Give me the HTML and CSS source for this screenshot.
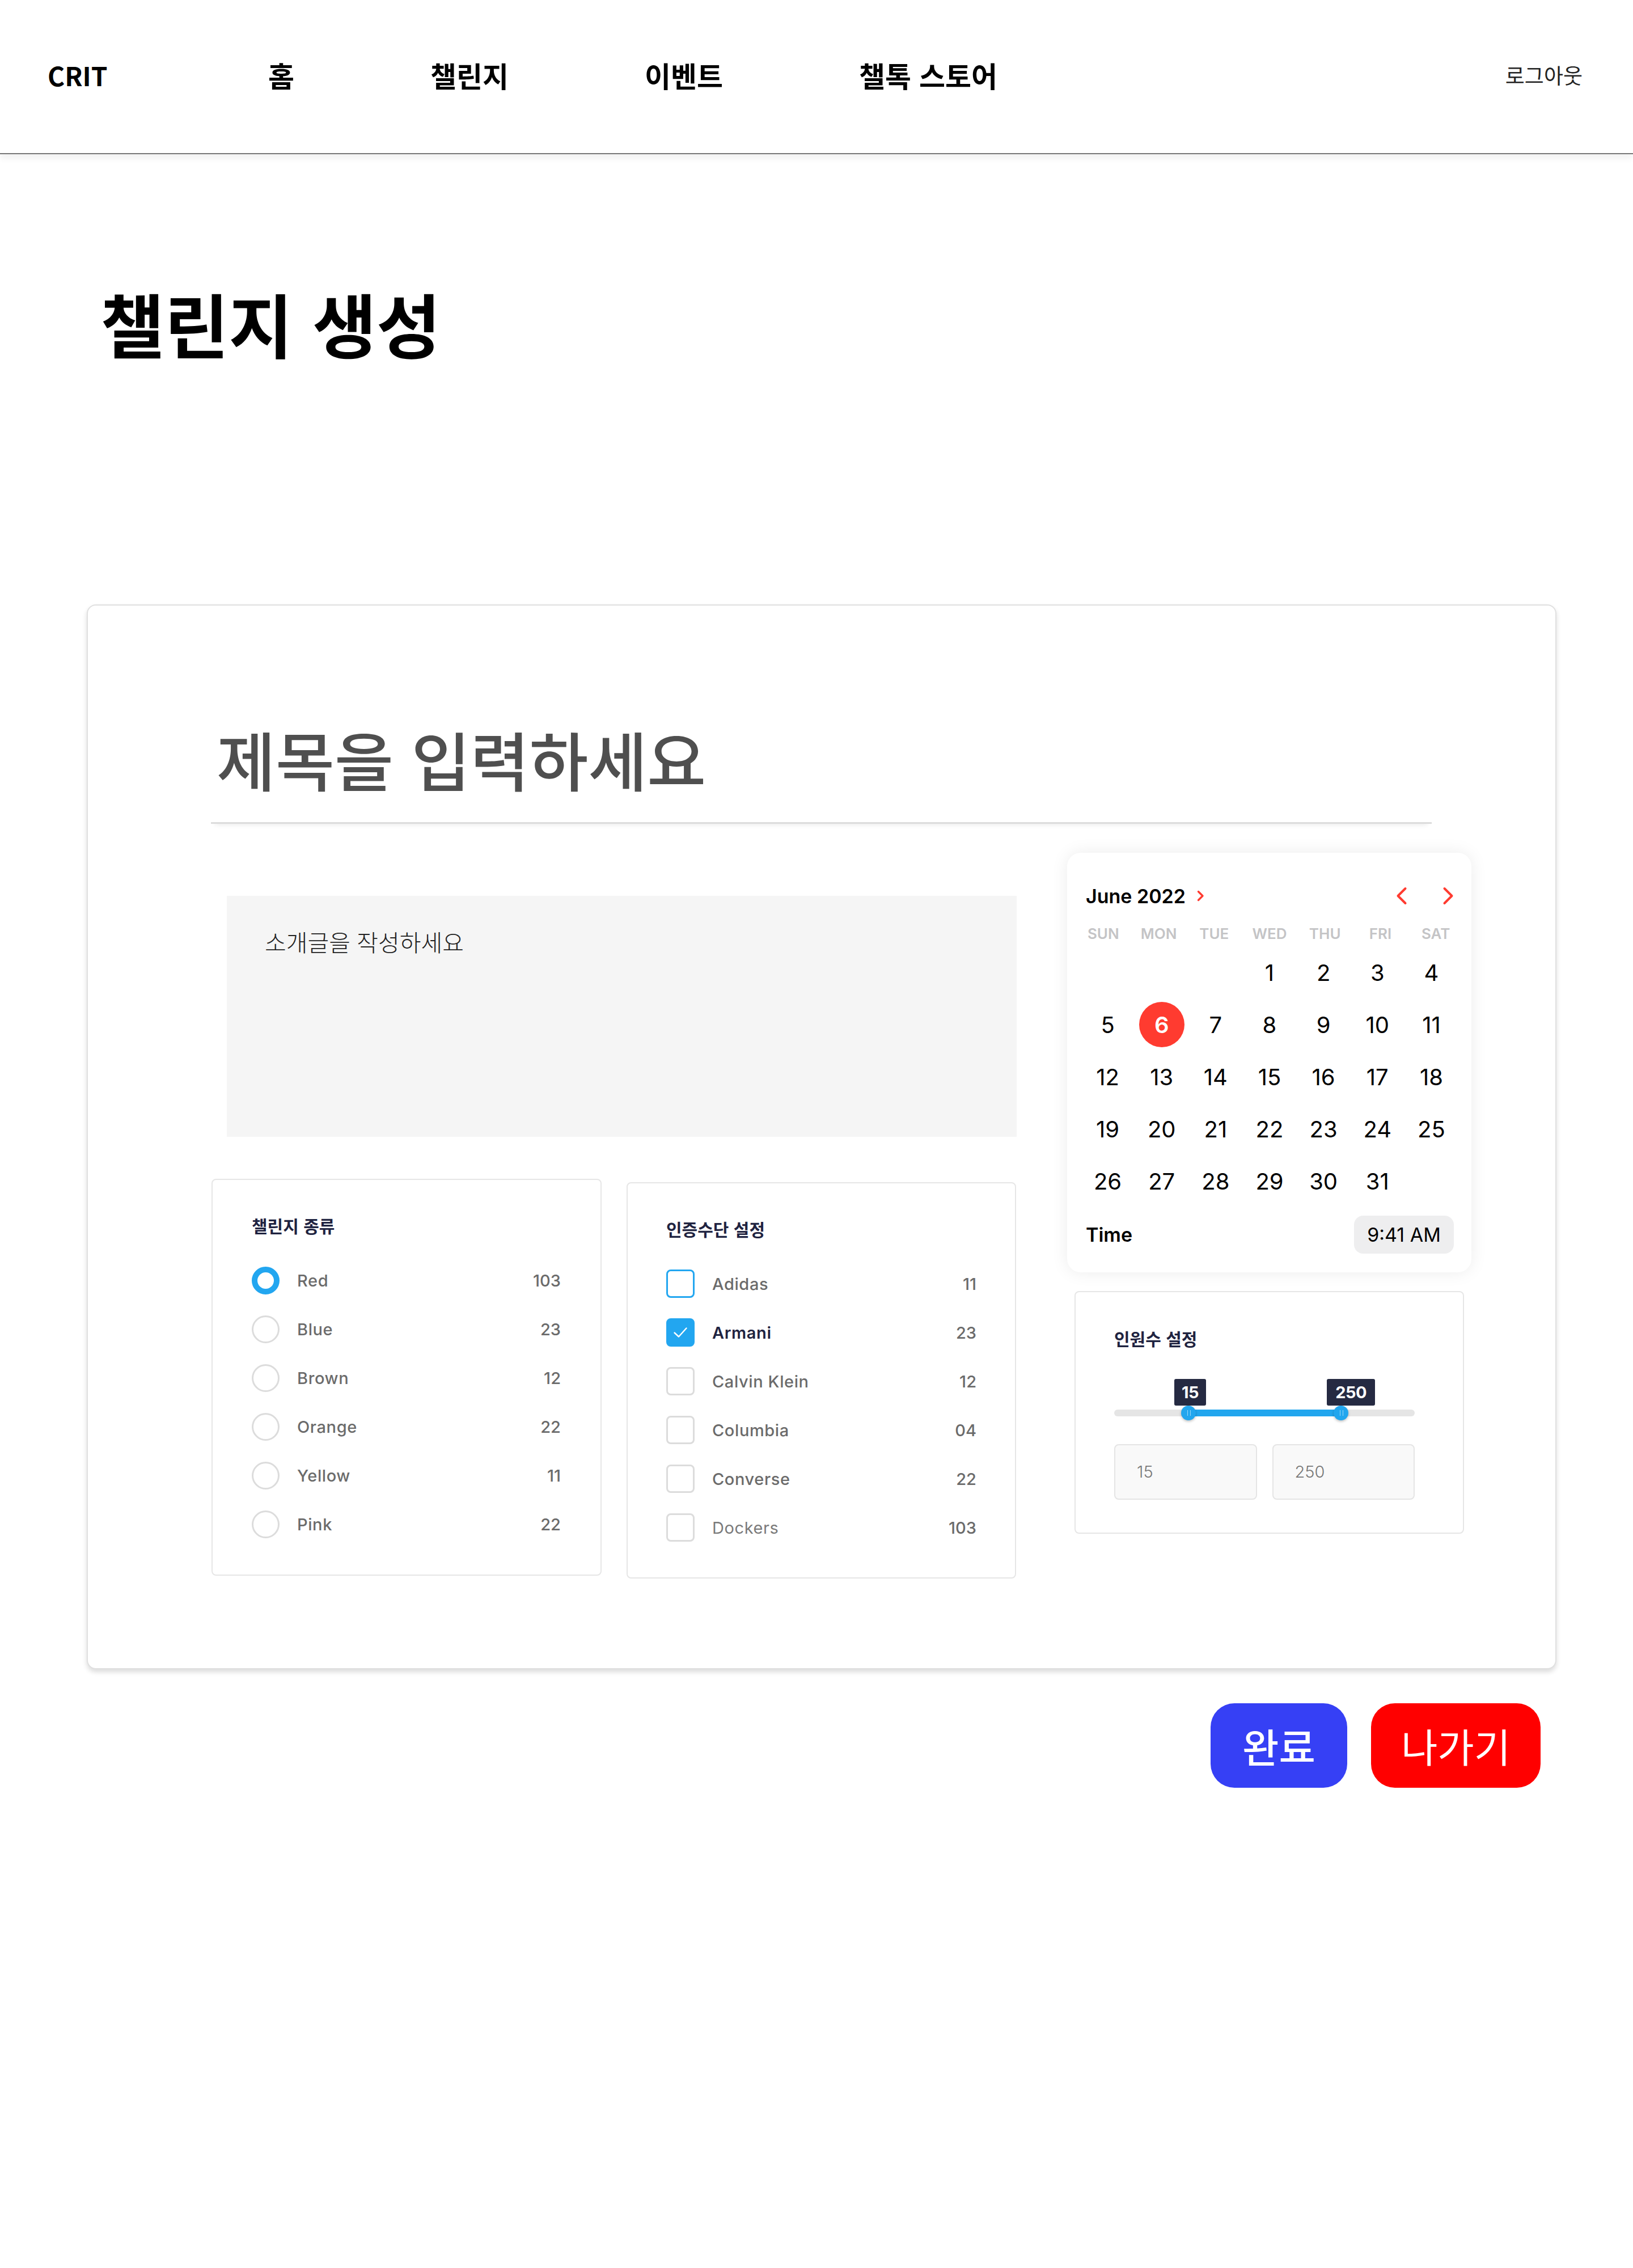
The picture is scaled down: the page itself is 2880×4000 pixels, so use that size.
FILE: index.html
```html
<!DOCTYPE html>
<html lang="ko">
<head>
<meta charset="utf-8">
<title>챌린지 생성</title>
<link rel="stylesheet" href="styles.css">
</head>
<body>
<header class="topbar">
  <div class="brand">CRIT</div>
  <nav class="menu">
    <a class="menu-item">홈</a>
    <a class="menu-item">챌린지</a>
    <a class="menu-item">이벤트</a>
    <a class="menu-item">챌톡 스토어</a>
  </nav>
  <a class="logout">로그아웃</a>
</header>

<main class="page">
  <h1 class="page-title">챌린지 생성</h1>

  <section class="card">
    <div class="title-field">제목을 입력하세요</div>

    <div class="body-row">
      <div class="left-col">
        <div class="intro">소개글을 작성하세요</div>

        <div class="panels">
          <div class="panel types">
            <h3 class="panel-title">챌린지 종류</h3>
            <ul class="options">
              <li class="option"><span class="radio on"></span><span class="label">Red</span><span class="count">103</span></li>
              <li class="option"><span class="radio"></span><span class="label">Blue</span><span class="count">23</span></li>
              <li class="option"><span class="radio"></span><span class="label">Brown</span><span class="count">12</span></li>
              <li class="option"><span class="radio"></span><span class="label">Orange</span><span class="count">22</span></li>
              <li class="option"><span class="radio"></span><span class="label">Yellow</span><span class="count">11</span></li>
              <li class="option"><span class="radio"></span><span class="label">Pink</span><span class="count">22</span></li>
            </ul>
          </div>

          <div class="panel auth">
            <h3 class="panel-title">인증수단 설정</h3>
            <ul class="options">
              <li class="option"><span class="check focus"></span><span class="label">Adidas</span><span class="count">11</span></li>
              <li class="option"><span class="check checked"><svg width="26" height="20" viewBox="0 0 26 20"><path d="M2.5 10.5l7.5 7L23.5 2.5" fill="none" stroke="#fff" stroke-width="2.4" stroke-linecap="round" stroke-linejoin="round"/></svg></span><span class="label strong">Armani</span><span class="count">23</span></li>
              <li class="option"><span class="check"></span><span class="label">Calvin Klein</span><span class="count">12</span></li>
              <li class="option"><span class="check"></span><span class="label">Columbia</span><span class="count">04</span></li>
              <li class="option"><span class="check"></span><span class="label">Converse</span><span class="count">22</span></li>
              <li class="option"><span class="check"></span><span class="label light">Dockers</span><span class="count">103</span></li>
            </ul>
          </div>
        </div>
      </div>

      <div class="right-col">
        <div class="calendar">
          <div class="cal-head">
            <div class="cal-month">June 2022
              <svg width="14" height="22" viewBox="0 0 14 22"><path d="M3.5 3.5l7.5 7.5-7.5 7.5" fill="none" stroke="#ff3b30" stroke-width="3.4" stroke-linecap="round" stroke-linejoin="round"/></svg>
            </div>
            <div class="cal-nav">
              <svg width="20" height="32" viewBox="0 0 20 32"><path d="M16.5 3L3.5 16l13 13" fill="none" stroke="#ff3b30" stroke-width="4" stroke-linecap="round" stroke-linejoin="round"/></svg>
              <svg width="20" height="32" viewBox="0 0 20 32"><path d="M3.5 3l13 13-13 13" fill="none" stroke="#ff3b30" stroke-width="4" stroke-linecap="round" stroke-linejoin="round"/></svg>
            </div>
          </div>
          <div class="cal-week">
            <span>SUN</span><span>MON</span><span>TUE</span><span>WED</span><span>THU</span><span>FRI</span><span>SAT</span>
          </div>
          <div class="cal-days">
            <span></span><span></span><span></span><span>1</span><span>2</span><span>3</span><span>4</span>
            <span>5</span><span><b class="today">6</b></span><span>7</span><span>8</span><span>9</span><span>10</span><span>11</span>
            <span>12</span><span>13</span><span>14</span><span>15</span><span>16</span><span>17</span><span>18</span>
            <span>19</span><span>20</span><span>21</span><span>22</span><span>23</span><span>24</span><span>25</span>
            <span>26</span><span>27</span><span>28</span><span>29</span><span>30</span><span>31</span><span></span>
          </div>
          <div class="cal-time">
            <span class="time-label">Time</span>
            <span class="time-pill">9:41 AM</span>
          </div>
        </div>

        <div class="panel people">
          <h3 class="panel-title">인원수 설정</h3>
          <div class="slider">
            <div class="slider-fill"></div>
            <span class="tip tip-min">15</span>
            <span class="tip tip-max">250</span>
            <span class="handle h-min"></span>
            <span class="handle h-max"></span>
          </div>
          <div class="range-inputs">
            <div class="range-input">15</div>
            <div class="range-input">250</div>
          </div>
        </div>
      </div>
    </div>
  </section>

  <div class="actions">
    <button class="btn done">완료</button>
    <button class="btn exit">나가기</button>
  </div>
</main>
</body>
</html>
```

FILE: styles.css
```css
* { box-sizing: border-box; }

body {
  margin: 0;
  background: #fff;
  color: #000;
  font-family: "Noto Sans CJK KR", "Noto Sans", sans-serif;
}

/* ---------- top bar ---------- */
.topbar {
  display: flex;
  align-items: center;
  height: 272px;
  padding: 0 89px 6px 84px;
  border-bottom: 2px solid #777;
  box-shadow: 0 8px 10px rgba(0, 0, 0, 0.05);
}
.brand {
  width: 389px;
  font-size: 46px;
  font-weight: 700;
  line-height: 1;
}
.menu {
  display: flex;
  gap: 240px;
}
.menu-item {
  font-size: 50px;
  font-weight: 700;
  line-height: 1;
  color: #000;
}
.logout {
  margin-left: auto;
  font-size: 37px;
  line-height: 1;
  color: #222;
}

/* ---------- page ---------- */
.page-title {
  margin: 226px 0 0 177px;
  font-size: 123px;
  line-height: 140px;
  font-weight: 700;
}

.card {
  margin: 428px 0 0 153px;
  width: 2592px;
  border: 2px solid #e0e0e0;
  border-radius: 16px;
  box-shadow: 0 5px 8px rgba(0, 0, 0, 0.14);
  padding: 204px 0 158px 0;
  background: #fff;
}

.title-field {
  margin-left: 217px;
  width: 2153px;
  padding: 0 0 48px 10px;
  font-size: 113px;
  line-height: 130px;
  font-weight: 500;
  color: #4f4f4f;
  border-bottom: 3px solid #dcdcdc;
  box-shadow: 0 10px 8px -8px rgba(0, 0, 0, 0.08);
}

.body-row {
  display: flex;
  align-items: flex-start;
  gap: 90px;
  margin: 51px 0 0 218px;
}
.left-col { width: 1419px; }

.intro {
  margin: 76px 0 0 27px;
  width: 1393px;
  height: 425px;
  background: #f5f5f5;
  padding: 55px 0 0 67px;
  font-size: 41px;
  line-height: 50px;
  font-weight: 300;
  color: #222;
}

.panels {
  display: flex;
  align-items: flex-start;
  gap: 44px;
  margin-top: 74px;
}

.panel {
  border: 2px solid #e6e6e6;
  border-radius: 8px;
  background: #fff;
}
.panel.types {
  width: 688px;
  height: 700px;
  padding: 0 70px 0 69px;
}
.panel.auth {
  width: 687px;
  height: 699px;
  margin-top: 6px;
  padding: 0 68px 0 68px;
}
.panel-title {
  margin: 0;
  padding-top: 60px;
  font-size: 30px;
  line-height: 40px;
  font-weight: 700;
  color: #1f2340;
}

.options {
  list-style: none;
  margin: 34px 0 0;
  padding: 0;
}
.option {
  display: flex;
  align-items: center;
  height: 86px;
}
.radio {
  flex: none;
  width: 49px;
  height: 49px;
  border-radius: 50%;
  border: 3px solid #dcdcdc;
}
.radio.on { border: 10px solid #22a6f0; }

.check {
  flex: none;
  display: flex;
  align-items: center;
  justify-content: center;
  width: 50px;
  height: 50px;
  border-radius: 8px;
  border: 3px solid #dcdcdc;
}
.check.focus { border-color: #22a6f0; }
.check.checked { border-color: #22a6f0; background: #22a6f0; }

.label {
  flex: 1;
  margin-left: 31px;
  font-family: "Inter", "Noto Sans", sans-serif;
  font-size: 29px;
  font-weight: 500;
  letter-spacing: 0.6px;
  color: #6b6b6b;
}
.label.strong { color: #1f2340; font-weight: 600; }
.label.light { font-weight: 400; color: #7a7a7a; }
.count {
  font-family: "Inter", "Noto Sans", sans-serif;
  font-size: 29px;
  font-weight: 500;
  color: #6b6b6b;
}

/* ---------- calendar ---------- */
.calendar {
  width: 713px;
  height: 740px;
  background: #fff;
  border-radius: 24px;
  box-shadow: 0 0 30px rgba(0, 0, 0, 0.08);
  padding-top: 56px;
  font-family: "Inter", "Noto Sans", sans-serif;
}
.cal-head {
  display: flex;
  align-items: center;
  justify-content: space-between;
  height: 40px;
  margin: 0 31px 0 33px;
}
.cal-month {
  display: flex;
  align-items: center;
  gap: 19px;
  font-size: 34px;
  font-weight: 600;
  color: #000;
}
.cal-nav {
  display: flex;
  gap: 62px;
}
.cal-week {
  display: grid;
  grid-template-columns: repeat(7, 1fr);
  margin: 30px 14px 0 15px;
  font-size: 26px;
  font-weight: 600;
  line-height: 34px;
  color: #c4c4c6;
  text-align: center;
}
.cal-days {
  display: grid;
  grid-template-columns: repeat(7, 1fr);
  grid-auto-rows: 92px;
  margin: 5px 23px 0 24px;
  font-size: 40px;
  font-weight: 400;
  color: #000;
}
.cal-days span {
  display: flex;
  align-items: center;
  justify-content: center;
}
.today {
  display: flex;
  align-items: center;
  justify-content: center;
  width: 80px;
  height: 80px;
  border-radius: 50%;
  background: #ff3b30;
  color: #fff;
  font-weight: 600;
}
.cal-time {
  display: flex;
  align-items: center;
  justify-content: space-between;
  height: 67px;
  margin: 15px 31px 0 33px;
}
.time-label {
  font-size: 34px;
  font-weight: 600;
}
.time-pill {
  display: flex;
  align-items: center;
  justify-content: center;
  width: 176px;
  height: 67px;
  border-radius: 16px;
  background: #eeeeef;
  font-size: 34px;
}

/* ---------- people / slider ---------- */
.panel.people {
  width: 687px;
  height: 428px;
  margin: 33px 0 0 13px;
  padding: 0 85px 0 68px;
  position: relative;
}
.panel.people .panel-title { padding-top: 61px; }

.slider {
  position: relative;
  height: 12px;
  margin-top: 106px;
  border-radius: 6px;
  background: #e5e5e5;
}
.slider-fill {
  position: absolute;
  top: 0;
  bottom: 0;
  left: 24.7%;
  right: 24.5%;
  background: #22a6ee;
}
.handle {
  position: absolute;
  top: 50%;
  width: 26px;
  height: 26px;
  margin: -13px 0 0 -13px;
  border-radius: 50%;
  background: #22a6ee;
  box-shadow: 0 2px 4px rgba(0, 0, 0, 0.25);
}
.handle::before {
  content: "";
  position: absolute;
  left: 11px;
  top: 8px;
  width: 4px;
  height: 10px;
  border-left: 1px solid rgba(255, 255, 255, 0.55);
  border-right: 1px solid rgba(255, 255, 255, 0.55);
}
.h-min { left: 24.7%; }
.h-max { left: 75.5%; }

.tip {
  position: absolute;
  bottom: 19px;
  height: 47px;
  border-radius: 3px;
  background: #252a42;
  color: #fff;
  font-family: "Inter", "Noto Sans", sans-serif;
  font-size: 29px;
  font-weight: 700;
  line-height: 47px;
  text-align: center;
  letter-spacing: -0.5px;
}
.tip-min { left: calc(24.7% - 25px); width: 56px; }
.tip-max { left: calc(75.5% - 25px); width: 85px; }

.range-inputs {
  display: grid;
  grid-template-columns: 1fr 1fr;
  gap: 27px;
  margin-top: 49px;
}
.range-input {
  height: 98px;
  border: 2px solid #e5e5e5;
  border-radius: 8px;
  background: #f9f9f9;
  padding-left: 38px;
  font-family: "Inter", "Noto Sans", sans-serif;
  font-size: 29px;
  font-weight: 300;
  line-height: 94px;
  color: #777;
}

/* ---------- actions ---------- */
.actions {
  display: flex;
  justify-content: flex-end;
  gap: 42px;
  width: 2592px;
  margin: 60px 0 0 153px;
  padding-right: 28px;
}
.btn {
  height: 149px;
  border: 0;
  border-radius: 42px;
  color: #fff;
  font-family: "Noto Sans CJK KR", "Noto Sans", sans-serif;
  font-size: 70px;
  line-height: 1;
  padding: 0;
}
.btn.done { width: 241px; background: #3640f5; font-weight: 500; }
.btn.exit { width: 299px; background: #ff0000; font-weight: 400; }
```
